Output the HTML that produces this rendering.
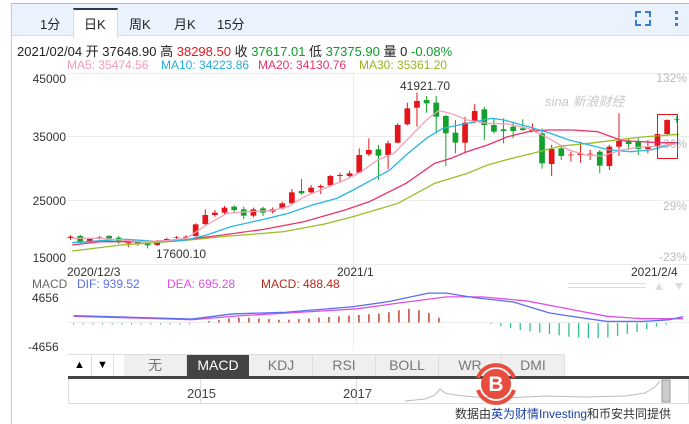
<!DOCTYPE html>
<html><head><meta charset="utf-8"><style>
html,body{margin:0;padding:0;width:689px;height:424px;overflow:hidden;background:#fff;font-family:"Liberation Sans","Noto Sans CJK SC",sans-serif;font-size:12px;}
.abs{position:absolute;white-space:nowrap;}
</style></head><body>
<div class="abs" style="left:11px;top:3px;width:678px;height:1px;background:#b4b8c0"></div>
<div class="abs" style="left:11px;top:4px;width:678px;height:31px;background:#eaf2fd;border-bottom:1px solid #d4dde8"></div>
<div class="abs" style="left:11px;top:3px;width:1px;height:421px;background:#c8ccd2"></div>
<div class="abs" style="left:73px;top:8px;width:43px;height:28px;background:#fff;border-top:2px solid #2b3a55;border-left:1px solid #d4dde8;border-right:1px solid #d4dde8"></div>
<div class="abs" style="left:40px;top:14px;font-size:13px;color:#222">1分</div>
<div class="abs" style="left:84px;top:14px;font-size:13px;color:#222">日K</div>
<div class="abs" style="left:129px;top:14px;font-size:13px;color:#222">周K</div>
<div class="abs" style="left:174px;top:14px;font-size:13px;color:#222">月K</div>
<div class="abs" style="left:217px;top:14px;font-size:13px;color:#222">15分</div>
<svg class="abs" style="left:634px;top:10px" width="50" height="18"><g fill="#3a7bd5"><rect x="1" y="1" width="6" height="2"/><rect x="1" y="1" width="2" height="6"/><rect x="11" y="1" width="6" height="2"/><rect x="15" y="1" width="2" height="6"/><rect x="1" y="14" width="6" height="2"/><rect x="1" y="10" width="2" height="6"/><rect x="11" y="14" width="6" height="2"/><rect x="15" y="10" width="2" height="6"/><rect x="41" y="1" width="3" height="3"/><rect x="41" y="7" width="3" height="3"/><rect x="41" y="13" width="3" height="3"/></g></svg>
<div class="abs" style="left:17px;top:41px;font-size:13px;color:#222">2021/02/04 开 37648.90 高 <span style="color:#e4161b">38298.50</span> 收 <span style="color:#0d9c2a">37617.01</span> 低 <span style="color:#0d9c2a">37375.90</span> 量 0 <span style="color:#0d9c2a">-0.08%</span></div>
<div class="abs" style="left:67px;top:58px;font-size:12px;color:#f79bb5">MA5: 35474.56</div>
<div class="abs" style="left:161px;top:58px;font-size:12px;color:#27aedb">MA10: 34223.86</div>
<div class="abs" style="left:258px;top:58px;font-size:12px;color:#e8336a">MA20: 34130.76</div>
<div class="abs" style="left:359px;top:58px;font-size:12px;color:#9bb31f">MA30: 35361.20</div>
<svg class="abs" style="left:0;top:0" width="689" height="424" id="s">
<g stroke="#ececec" stroke-width="1">
<line x1="68" y1="73.5" x2="689" y2="73.5"/><line x1="68" y1="136.5" x2="689" y2="136.5"/><line x1="68" y1="200.5" x2="689" y2="200.5"/><line x1="68" y1="264.5" x2="689" y2="264.5"/>
<line x1="353.5" y1="72" x2="353.5" y2="350"/><line x1="68" y1="322.5" x2="689" y2="322.5"/>
</g>
<g font-size="12" fill="#333" font-family="Liberation Sans,sans-serif">
<text x="66" y="83" text-anchor="end">45000</text><text x="66" y="141" text-anchor="end">35000</text><text x="66" y="205" text-anchor="end">25000</text><text x="66" y="262" text-anchor="end">15000</text>
<text x="400" y="90">41921.70</text><text x="156" y="258">17600.10</text>
<text x="67" y="276">2020/12/3</text><text x="337" y="276">2021/1</text><text x="631" y="276">2021/2/4</text>
<text x="32" y="302">4656</text><text x="28" y="351">-4656</text>
</g>
<g font-size="12" fill="#bbb" font-family="Liberation Sans,sans-serif" text-anchor="end">
<text x="687" y="82">132%</text><text x="687" y="148">36%</text><text x="687" y="210">29%</text><text x="687" y="261">-23%</text>
</g>
<text x="545" y="106" font-size="13" fill="#c8c8c8" font-style="italic" font-family="Liberation Sans,Noto Sans CJK SC,sans-serif">sina 新浪财经</text>
<g id="main" transform="translate(60,70) scale(0.40717,0.33333)"></g>
<rect x="657.5" y="114.5" width="20" height="44" fill="none" stroke="#e4161b"/>
<g font-size="12" font-family="Liberation Sans,sans-serif">
<text x="32" y="288" fill="#666">MACD</text><text x="77" y="288" fill="#5b6ef0">DIF: 939.52</text><text x="167" y="288" fill="#e050e0">DEA: 695.28</text><text x="261" y="288" fill="#b8261a">MACD: 488.48</text>
</g>
<g fill="#ddd"><rect x="568" y="283" width="78" height="1"/><rect x="568" y="287" width="78" height="1"/><path d="M655 290l4-7 4 7z"/><path d="M675 283l4 7 4-7z"/></g>
<g id="macd" transform="translate(0,260) scale(0.44643,0.34130)"></g>
</svg>
<div class="abs" style="left:68px;top:354px;width:496px;height:22px;border-top:1px solid #ddd"></div>
<div class="abs" style="left:68px;top:355px;width:23px;height:21px;background:#fff;border-right:1px solid #ddd;text-align:center;line-height:21px;font-size:11px">▲</div>
<div class="abs" style="left:92px;top:355px;width:21px;height:21px;background:#fff;border-right:1px solid #ddd;text-align:center;line-height:21px;font-size:11px">▼</div>
<div class="abs" style="left:124px;top:355px;width:440px;height:21px;background:#efefef;"></div>
<div class="abs" style="left:124px;top:355px;font-size:14px;color:#777;line-height:21px">
<span style="position:absolute;left:0;width:62px;text-align:center;border-right:1px solid #ddd">无</span>
<span style="position:absolute;left:63px;width:62px;text-align:center;background:#444;color:#fff">MACD</span>
<span style="position:absolute;left:126px;width:62px;text-align:center;border-right:1px solid #ddd">KDJ</span>
<span style="position:absolute;left:189px;width:62px;text-align:center;border-right:1px solid #ddd">RSI</span>
<span style="position:absolute;left:252px;width:62px;text-align:center;border-right:1px solid #ddd">BOLL</span>
<span style="position:absolute;left:315px;width:62px;text-align:center;border-right:1px solid #ddd">WR</span>
<span style="position:absolute;left:378px;width:62px;text-align:center;border-right:1px solid #ddd">DMI</span>
</div>
<div class="abs" style="left:68px;top:376px;width:621px;height:3px;background:#444"></div>
<div class="abs" style="left:68px;top:379px;width:619px;height:24px;border:1px solid #ddd;border-top:none"></div>
<div class="abs" style="left:200px;top:379px;width:1px;height:24px;background:#ddd"></div>
<div class="abs" style="left:356px;top:379px;width:1px;height:24px;background:#ddd"></div>
<div class="abs" style="left:187px;top:386px;font-size:13px;color:#444">2015</div>
<div class="abs" style="left:343px;top:386px;font-size:13px;color:#444">2017</div>
<svg class="abs" style="left:405px;top:379px" width="284" height="24"><polyline fill="none" stroke="#bbb" points="0,22 20,20 30,16 35,10 40,14 50,16 70,18 100,19 140,17 180,18 220,17 240,14 250,8 255,2" /><rect x="257" y="1" width="8" height="22" fill="#ccc" stroke="#999"/></svg>
<svg class="abs" style="left:470px;top:358px" width="52" height="52"><path d="M8 20 A19 19 0 0 1 44 20" fill="none" stroke="#e84c3d" stroke-width="4"/><path d="M8 32 A19 19 0 0 0 44 32" fill="none" stroke="#e84c3d" stroke-width="4"/><circle cx="26" cy="26" r="15" fill="#e84c3d"/><text x="26" y="33" font-size="21" font-weight="bold" fill="#fff" text-anchor="middle" font-family="Liberation Sans,sans-serif">B</text></svg>
<div class="abs" style="left:455px;top:405px;font-size:12px;color:#333">数据由<span style="color:#1a3fa6">英为财情Investing</span>和币安共同提供</div>
<script>
var NS="http://www.w3.org/2000/svg";
function el(p,t,a){var e=document.createElementNS(NS,t);for(var k in a)e.setAttribute(k,a[k]);e.setAttribute("vector-effect","non-scaling-stroke");p.appendChild(e);return e;}
var m=document.getElementById("main");
var R="#e4161b",G="#12a12c";
var c=[[R,500,504,495,510],[G,498,515,494,520],[R,507,515,503,518],[R,502,504,498,508],[G,498,505,495,510],[G,503,515,498,522],[R,517,520,512,532],[G,517,522,512,528],[G,520,526,515,535],[R,513,525,510,528],[R,507,512,503,515],[R,502,504,498,508],[R,500,503,496,506],[R,463,498,460,500],[R,435,462,418,465],[R,428,435,420,440],[R,413,428,408,432],[G,410,420,406,428],[G,418,437,410,447],[R,418,437,413,442],[G,415,428,410,438],[R,418,425,412,430],[R,400,415,395,418],[R,367,400,357,403],[G,363,370,327,374],[R,353,367,345,370],[R,348,352,343,372],[R,318,346,315,350],[R,315,318,308,335],[R,310,318,302,322],[R,255,308,235,310],[R,240,253,205,258],[G,238,257,225,330],[R,220,255,212,297],[R,165,218,160,220],[R,115,163,98,166],[R,93,113,68,170],[G,90,100,78,128],[G,98,140,78,190],[G,138,190,135,288],[G,188,218,150,250],[R,158,218,140,248],[R,123,155,102,160],[G,118,165,110,210],[G,165,185,145,190],[G,178,183,145,220],[G,170,183,155,205],[G,175,180,148,183],[R,178,183,160,183],[G,190,280,175,296],[R,237,282,225,318],[G,235,258,228,270],[R,254,256,245,275],[R,250,255,215,278],[R,251,253,240,270],[G,245,287,240,310],[R,230,288,225,300],[R,213,230,130,258],[G,213,222,205,240],[G,215,237,205,255],[R,230,237,210,250],[R,192,230,182,240],[R,150,192,148,194],[G,147,149,138,158]];
for(var i=0;i<c.length;i++){var x=26+i*23.63,d=c[i];
el(m,"line",{x1:x,x2:x,y1:d[3],y2:d[4],stroke:d[0],"stroke-width":1});
el(m,"rect",{x:x-7,y:d[1],width:14,height:Math.max(d[2]-d[1],2),fill:d[0]});}
function pl(g,pts,col){el(g,"polyline",{points:pts,fill:"none",stroke:col,"stroke-width":1.3});}
pl(m,"30,543 150,525 300,512 400,500 550,485 650,462 720,440 830,400 920,340 1000,310 1050,285 1100,268 1160,250 1230,228 1300,220 1380,208 1440,200 1520,193","#9bbd2a");
pl(m,"30,525 100,515 200,515 300,510 400,495 500,478 600,455 700,420 760,395 850,340 920,280 960,265 1000,245 1050,225 1100,200 1150,185 1200,180 1260,180 1320,185 1380,212 1430,215 1470,218 1520,218","#e8336a");
pl(m,"30,518 100,512 160,508 250,515 310,510 360,495 420,470 500,448 560,430 620,405 680,385 720,360 780,320 810,300 850,255 900,205 940,175 1000,160 1060,145 1090,150 1150,170 1200,188 1250,210 1300,225 1350,240 1400,245 1450,240 1520,218","#29b6e0");
pl(m,"30,505 100,505 200,515 260,512 310,505 360,465 410,430 460,425 520,422 560,410 600,380 650,355 700,330 740,305 780,270 820,250 860,200 900,150 930,122 960,130 1000,150 1050,160 1100,162 1150,175 1200,205 1250,240 1290,255 1330,258 1380,240 1420,232 1470,228 1520,220","#f4a0b8");
var g=document.getElementById("macd");
for(var x=165;x<430;x+=21.6)el(g,"line",{x1:x,x2:x,y1:185,y2:189,stroke:"#2ec28a"});
var rh=[4,8,12,14,14,12,10,8,8,10,12,14,16,18,20,22,24,26,30,36,40,36,28,14];
for(var i=0;i<rh.length;i++){var x=468+i*22.4;el(g,"line",{x1:x,x2:x,y1:183,y2:183-rh[i],stroke:"#b8261a","stroke-width":1.3});}
var gh=[2,8,14,20,24,28,32,36,40,42,44,44,42,38,32,26,18,10,4];
for(var i=0;i<gh.length;i++){var x=1100+i*21.8;el(g,"line",{x1:x,x2:x,y1:185,y2:185+gh[i],stroke:"#2ec28a","stroke-width":1.3});}
pl(g,"165,165 300,170 430,175 540,163 650,155 800,143 900,125 1000,108 1080,108 1180,120 1280,145 1360,165 1440,172 1530,172","#e050e0");
pl(g,"165,163 300,168 430,173 520,158 640,153 790,137 870,122 960,97 1000,97 1060,110 1150,123 1230,155 1290,167 1360,180 1440,180 1500,175 1530,166","#5b6ef0");
</script>
</body></html>
